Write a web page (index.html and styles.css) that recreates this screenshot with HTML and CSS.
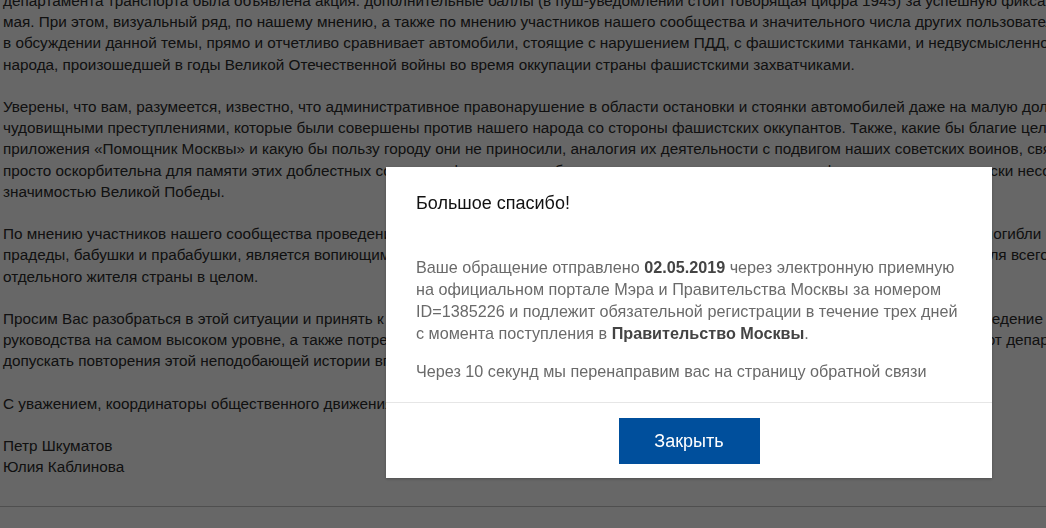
FILE: index.html
```html
<!DOCTYPE html>
<html lang="ru">
<head>
<meta charset="utf-8">
<title>Обращение</title>
<link rel="stylesheet" href="styles.css">
</head>
<body>
<div class="page">
  <div class="letter">
    <p>департамента транспорта была объявлена акция: дополнительные баллы (в пуш-уведомлении стоит говорящая цифра 1945) за успешную фиксацию нарушений<br>
    мая. При этом, визуальный ряд, по нашему мнению, а также по мнению участников нашего сообщества и значительного числа других пользователей<br>
    в обсуждении данной темы, прямо и отчетливо сравнивает автомобили, стоящие с нарушением ПДД, с фашистскими танками, и недвусмысленно<br>
    народа, произошедшей в годы Великой Отечественной войны во время оккупации страны фашистскими захватчиками.</p>
    <p>Уверены, что вам, разумеется, известно, что административное правонарушение в области остановки и стоянки автомобилей даже на малую долю<br>
    чудовищными преступлениями, которые были совершены против нашего народа со стороны фашистских оккупантов. Также, какие бы благие цели<br>
    приложения «Помощник Москвы» и какую бы пользу городу они не приносили, аналогия их деятельности с подвигом наших советских воинов, свя<br>
    просто оскорбительна для памяти этих доблестных солдат и офицеров, освободивших нашу страну и весь мир от фашизма, и категорически несо<br>
    значимостью Великой Победы.</p>
    <p>По мнению участников нашего сообщества проведение подобной акции в честь праздника Победы, в этой войне, в которой сражались и погибли наши деды и<br>
    прадеды, бабушки и прабабушки, является вопиющим неуважением к их светлой памяти и великому подвигу и очень оскорбительно как для всего народа, так и для каждого<br>
    отдельного жителя страны в целом.</p>
    <p>Просим Вас разобраться в этой ситуации и принять к сведению позицию нашего сообщества, а также обеспечить незамедлительное проведение встречи с представителями<br>
    руководства на самом высоком уровне, а также потребовать официальных извинений перед ветеранами войны и их семьями и гарантий от департамента<br>
    допускать повторения этой неподобающей истории впредь.</p>
    <p>С уважением, координаторы общественного движения «Синие ведерки»</p>
    <p>Петр Шкуматов<br>
    Юлия Каблинова</p>
  </div>
  <div class="page-footer"></div>
</div>

<div class="overlay"></div>

<div class="modal">
  <div class="modal-body">
    <h2 class="modal-title">Большое спасибо!</h2>
    <p class="modal-text">Ваше обращение отправлено <b>02.05.2019</b> через электронную приемную<br>на официальном портале Мэра и Правительства Москвы за номером<br>ID=1385226 и подлежит обязательной регистрации в течение трех дней<br>с момента поступления в <b>Правительство Москвы</b>.</p>
    <p class="modal-text">Через 10 секунд мы перенаправим вас на страницу обратной связи</p>
  </div>
  <div class="modal-footer">
    <button class="btn-close" type="button">Закрыть</button>
  </div>
</div>
</body>
</html>
```

FILE: styles.css
```css
html, body {
  margin: 0;
  padding: 0;
  height: 100%;
  overflow: hidden;
  background: #ffffff;
}

body {
  font-family: "Liberation Sans", Arial, sans-serif;
}

.page {
  width: 100%;
  height: 100%;
  overflow: hidden;
}

.letter {
  margin-top: -10px;
  padding-left: 3px;
  font-size: 15.3px;
  line-height: 21.2px;
  color: #2a2a2a;
  white-space: nowrap;
}

.letter p {
  margin: 0 0 21.2px 0;
}

.page-footer {
  margin-top: 28px;
  border-top: 1px solid #c4c4c4;
}

.overlay {
  position: fixed;
  inset: 0;
  background: rgba(0, 0, 0, 0.595);
}

.modal {
  position: fixed;
  left: 386px;
  top: 167px;
  width: 606px;
  background: #ffffff;
  box-shadow: 0 1px 3px rgba(0, 0, 0, 0.25);
}

.modal-body {
  padding: 24px 30px 20px 30px;
  border-bottom: 1px solid #e6e6e6;
}

.modal-title {
  margin: 0 0 41px 0;
  font-size: 18px;
  font-weight: normal;
  line-height: 24px;
  color: #111111;
}

.modal-text {
  margin: 0 0 16px 0;
  font-size: 16.2px;
  line-height: 22px;
  color: #6a6a6a;
}

.modal-text:last-child {
  margin-bottom: 0;
}

.modal-text b {
  color: #444444;
}

.modal-footer {
  display: flex;
  justify-content: center;
  padding: 15px 0 14px 0;
}

.btn-close {
  width: 141px;
  height: 46px;
  border: 0;
  border-radius: 0;
  background: #004f9c;
  color: #ffffff;
  font-family: "Liberation Sans", Arial, sans-serif;
  font-size: 18px;
  cursor: pointer;
}
```
